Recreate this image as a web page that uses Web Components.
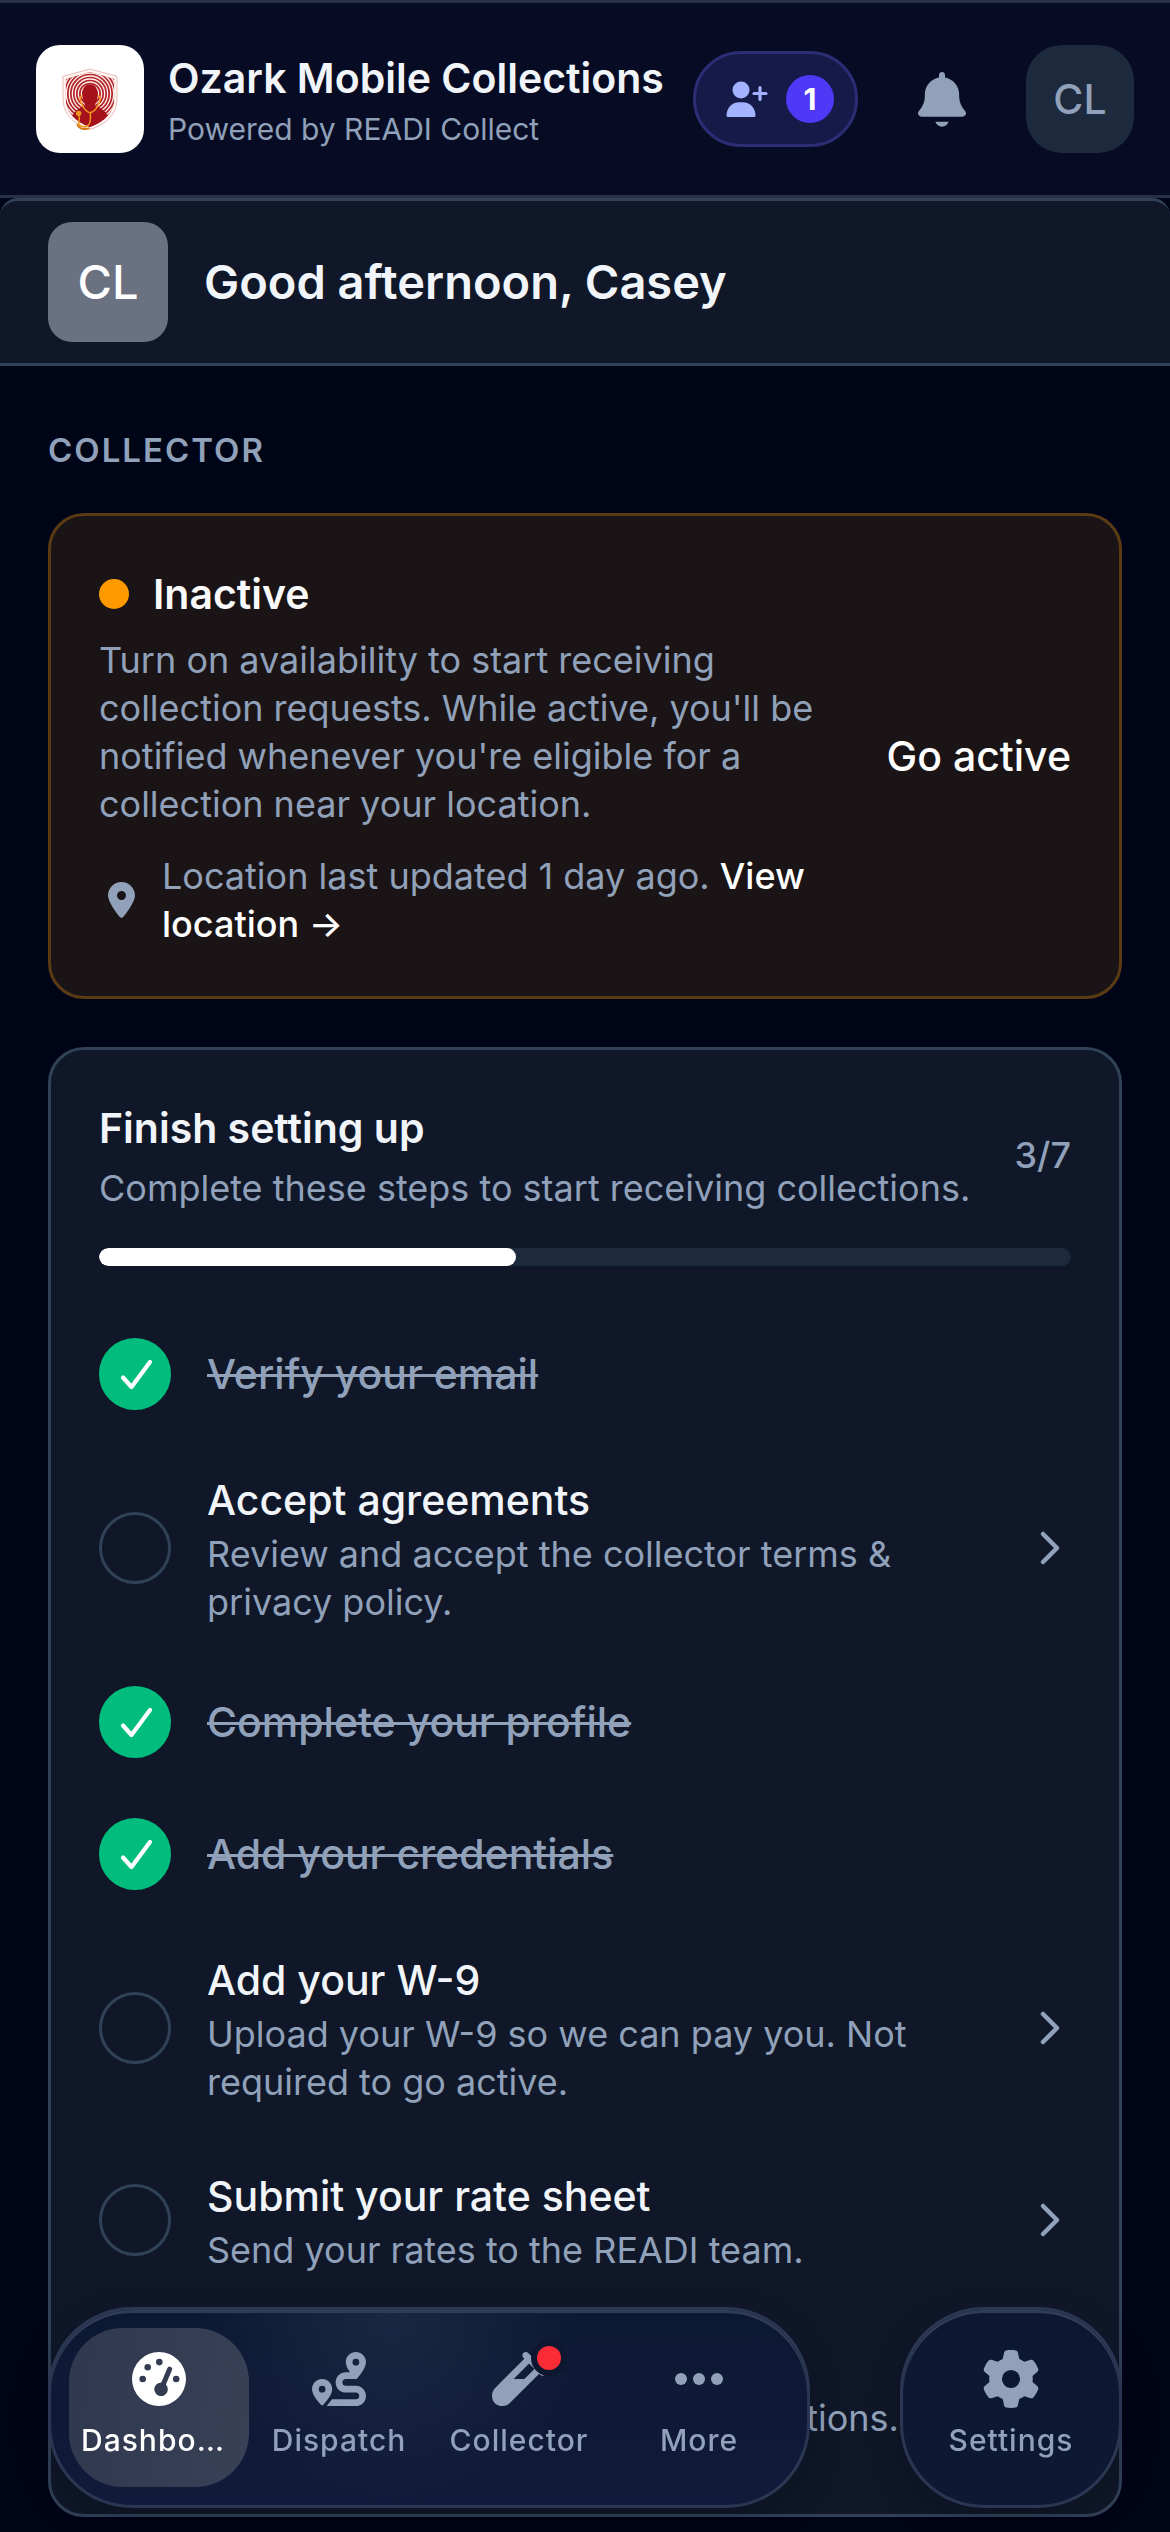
<!DOCTYPE html>
<html lang="en">
<head>
<meta charset="utf-8">
<meta name="viewport" content="width=device-width, initial-scale=1">
<title>Ozark Mobile Collections</title>
<style>
:root {
  --page: #000417;
  --panel: #0f1729;
  --line: #314158;
  --track: #1d293d;
  --muted: #90a1b9;
  --text: #f1f5f9;
  --small: 30px;
  --body: 36px;
  --title: 41px;
  --hero: 47px;
}
* { box-sizing: border-box; }
html { background: var(--page); }
body { margin: 0; min-height: 100vh; background: var(--page); color: var(--text); font-family: Inter, "Noto Sans", sans-serif; font-size: var(--body); line-height: 48px; }
main { display: flex; flex-direction: column; padding: 57px 48px 15px; }
h2 { margin: 0 0 36px; color: var(--muted); font-size: 33px; line-height: 54px; font-weight: 600; letter-spacing: 2px; text-transform: uppercase; }
.cards { display: flex; flex-direction: column; gap: 48px; }
</style>
</head>
<body>
<app-header name="Ozark Mobile Collections" tagline="Powered by READI Collect" requests="1" initials="CL"></app-header>
<greeting-bar initials="CL">Good afternoon, Casey</greeting-bar>
<main>
  <h2>Collector</h2>
  <div class="cards">
    <availability-card>
      <span slot="status">Inactive</span>
      <span slot="text">Turn on availability to start receiving collection requests. While active, you'll be notified whenever you're eligible for a collection near your location.</span>
      <span slot="updated">Location last updated 1 day ago.</span>
      <span slot="link">View location →</span>
      <span slot="action">Go active</span>
    </availability-card>
    <setup-card done="3" total="7">
      <span slot="title">Finish setting up</span>
      <span slot="text">Complete these steps to start receiving collections.</span>
      <setup-step done>Verify your email</setup-step>
      <setup-step note="Review and accept the collector terms &amp; privacy policy.">Accept agreements</setup-step>
      <setup-step done>Complete your profile</setup-step>
      <setup-step done>Add your credentials</setup-step>
      <setup-step note="Upload your W-9 so we can pay you. Not required to go active.">Add your W-9</setup-step>
      <setup-step note="Send your rates to the READI team.">Submit your rate sheet</setup-step>
      <setup-step note="Choose how you learn about collections.">Enable alerts</setup-step>
    </setup-card>
  </div>
</main>
<tab-dock>
  <tab-item icon="gauge" current>Dashboard</tab-item>
  <tab-item icon="route">Dispatch</tab-item>
  <tab-item icon="vial" alert>Collector</tab-item>
  <tab-item icon="dots">More</tab-item>
  <tab-item slot="aside" icon="gear">Settings</tab-item>
</tab-dock>

<script>
const ICONS = {
  bell: ['0 0 448 512', 48, 55, '<path d="M224 0c-15 0-28 12-28 28V51C119 66 64 131 64 208v18.800c0 47-17.300 92.400-48.500 127.600l-7.400 8.300c-8.400 9.400-10.400 22.900-5.300 34.400S19.400 416 32 416H416c12.600 0 24-7.400 29.200-18.900s3.100-25-5.300-34.400l-7.400-8.300C401.300 319.200 384 273.900 384 226.800V208c0-77-55-142-132-157V28c0-16-13-28-28-28z"/><path d="M162 464h124c-9 28-33 46-62 46s-53-18-62-46z"/>'],
  userPlus: ['0 0 42 36', 42, 36, '<circle cx="15" cy="9" r="8.500"/><path d="M.5 34.500C.5 27 6 21.300 13 21.300h4c7 0 12.500 5.700 12.500 13.200 0 .8-.7 1.500-1.500 1.500H2C1.200 36 .5 35.300.5 34.500z"/><path d="M34 6.500v12M28 12.500h12" stroke="currentColor" stroke-width="3.200" stroke-linecap="round"/>'],
  pin: ['0 0 384 512', 27, 36, '<path d="M215.700 499.200C267 435 384 279.400 384 192C384 86 298 0 192 0S0 86 0 192c0 87.400 117 243 168.300 307.200c12.300 15.300 35.100 15.300 47.400 0zM192 128a64 64 0 1 1 0 128 64 64 0 1 1 0-128z"/>'],
  check: ['0 0 36 36', 36, 36, '<path d="M4.500 20.500l8.500 9.500L31.500 5" transform="translate(1.500 1)" fill="none" stroke="currentColor" stroke-width="4.200" stroke-linecap="round" stroke-linejoin="round"/>'],
  chevron: ['0 0 36 36', 42, 36, '<path d="M11 4l14 14-14 14" fill="none" stroke="currentColor" stroke-width="4.500" stroke-linecap="round" stroke-linejoin="round"/>'],
  gauge: ['0 0 54 54', 54, 54, '<path fill-rule="evenodd" d="M27 0a27 27 0 1 1 0 54a27 27 0 1 1 0-54zM10.700 23.700a3.300 3.300 0 1 0 0 6.600a3.300 3.300 0 1 0 0-6.600zM15.700 11.900a3.300 3.300 0 1 0 0 6.600a3.300 3.300 0 1 0 0-6.600zM27.300 6.800a3.300 3.300 0 1 0 0 6.600a3.300 3.300 0 1 0 0-6.600zM44.200 23.700a3.300 3.300 0 1 0 0 6.600a3.300 3.300 0 1 0 0-6.600zM38.700 14.900a2.500 2.500 0 0 0-3.300 1.200L29.300 30.400a6.800 6.800 0 1 0 4.600 2l6-14.200a2.500 2.500 0 0 0-1.200-3.300z"/>'],
  route: ['0 0 512 512', 54, 54, '<path d="M512 96c0 50.200-59.100 125.100-84.600 155c-3.800 4.400-9.400 6.100-14.500 5L320 256c-17.700 0-32 14.300-32 32s14.300 32 32 32l96 0c53 0 96 43 96 96s-43 96-96 96l-276.400 0c8.700-9.900 19.300-22.600 30-36.800c6.300-8.400 12.800-17.600 19-27.200L416 448c17.700 0 32-14.300 32-32s-14.300-32-32-32l-96 0c-53 0-96-43-96-96s43-96 96-96l39.800 0c-21-31.500-39.800-67.700-39.800-96c0-53 43-96 96-96s96 43 96 96zM117.100 489.100c-3.800 4.300-7.200 8.100-10.100 11.300l-1.800 2-.2-.2c-6 4.600-14.600 4-20-1.800C59.800 473 0 402.500 0 352c0-53 43-96 96-96s96 43 96 96c0 30-21.100 67-43.500 97.900c-10.700 14.700-21.700 28-30.800 38.500l-.6 .7zM128 352a32 32 0 1 0 -64 0 32 32 0 1 0 64 0zM416 128a32 32 0 1 0 0-64 32 32 0 1 0 0 64z"/>'],
  vial: ['0 0 512 512', 54, 54, '<path d="M342.600 9.400c-12.500-12.500-32.800-12.500-45.300 0s-12.500 32.800 0 45.300l9.400 9.400L28.100 342.600C10.100 360.600 0 385 0 410.500V416c0 53 43 96 96 96h5.500c25.500 0 49.900-10.100 67.900-28.100L448 205.300l9.400 9.400c12.500 12.500 32.800 12.500 45.300 0s12.500-32.800 0-45.300l-32-32-96-96-32-32zM205.300 256L352 109.300 402.700 160l-96 96H205.300z"/>'],
  dots: ['0 0 54 54', 54, 54, '<circle cx="9" cy="27" r="6"/><circle cx="27" cy="27" r="6"/><circle cx="45" cy="27" r="6"/>'],
  gear: ['0 0 512 512', 58, 58, '<path d="M495.900 166.600c3.200 8.700 .5 18.400-6.400 24.600l-43.300 39.400c1.100 8.300 1.700 16.800 1.700 25.400s-.6 17.100-1.700 25.400l43.300 39.400c6.900 6.200 9.600 15.900 6.400 24.600c-4.400 11.900-9.700 23.300-15.800 34.300l-4.700 8.100c-6.600 11-14 21.400-22.100 31.200c-5.900 7.200-15.700 9.600-24.500 6.800l-55.700-17.700c-13.400 10.300-28.200 18.900-44 25.400l-12.500 57.100c-2 9.100-9 16.300-18.200 17.800c-13.800 2.300-28 3.500-42.500 3.500s-28.700-1.200-42.500-3.500c-9.200-1.500-16.200-8.700-18.200-17.800l-12.500-57.100c-15.800-6.500-30.600-15.100-44-25.400L83.100 425.900c-8.800 2.800-18.600 .3-24.500-6.800c-8.100-9.800-15.500-20.200-22.100-31.200l-4.700-8.100c-6.100-11-11.400-22.400-15.800-34.300c-3.200-8.700-.5-18.400 6.400-24.600l43.300-39.400C64.600 273.100 64 264.600 64 256s.6-17.100 1.700-25.400L22.400 191.200c-6.900-6.200-9.600-15.900-6.400-24.600c4.400-11.900 9.700-23.300 15.800-34.300l4.700-8.100c6.600-11 14-21.400 22.100-31.200c5.900-7.200 15.700-9.600 24.500-6.800l55.700 17.700c13.400-10.300 28.200-18.900 44-25.400l12.500-57.100c2-9.100 9-16.300 18.200-17.800C227.300 1.200 241.500 0 256 0s28.700 1.200 42.500 3.500c9.200 1.500 16.200 8.700 18.200 17.800l12.500 57.100c15.800 6.500 30.600 15.100 44 25.400l55.700-17.700c8.800-2.800 18.600-.3 24.500 6.800c8.100 9.800 15.500 20.200 22.100 31.200l4.700 8.100c6.100 11 11.400 22.400 15.800 34.300zM256 336a80 80 0 1 0 0-160 80 80 0 1 0 0 160z"/>']
};
const icon = n => { const [vb, w, h, d] = ICONS[n]; return `<svg viewBox="${vb}" width="${w}" height="${h}" fill="currentColor" aria-hidden="true">${d}</svg>`; };
const BASE = '*{box-sizing:border-box}svg{display:block;flex:none}a{color:inherit;text-decoration:none}button{margin:0;padding:0;border:0;background:none;color:inherit;font:inherit;cursor:pointer}p,h1,h3{margin:0}';

class Part extends HTMLElement {
  connectedCallback() {
    if (this.shadowRoot) return;
    this.attachShadow({ mode: 'open' }).innerHTML = `<style>${BASE}${this.css()}</style>${this.html()}`;
  }
  attr(n) { return (this.getAttribute(n) || '').replace(/&/g, '&amp;'); }
}

class BrandMark extends Part {
  css() { return ':host{display:flex;align-items:center;justify-content:center;flex:none;width:108px;height:108px;border-radius:24px;background:#fff}'; }
  html() {
    const rings = [26, 35, 44, 53, 62, 71, 80].map(r => `<ellipse cx="210" cy="222" rx="${r}" ry="${r}"/>`).join('');
    return `<svg viewBox="126 145 168 186" width="56" height="62" role="img" aria-label="Ozark shield">
      <defs><clipPath id="s"><path d="M210 157L283 178V236C283 276 256 306 210 322C164 306 137 276 137 236V178Z"/></clipPath></defs>
      <path d="M210 148L291 170V237C291 281 262 313 210 329C158 313 129 281 129 237V170Z" fill="#fff6f4" stroke="#dc9a92" stroke-width="2"/>
      <g clip-path="url(#s)"><rect x="126" y="145" width="168" height="186" fill="#b3262a"/>
        <g fill="none" stroke="#fff1ee" stroke-width="3.800">${rings}</g>
        <path d="M150 330C150 285 165 270 192 260H228C255 270 270 285 270 330Z" fill="#a5121c"/>
        <path d="M187 226C187 204 196 194 210 194S233 204 233 226C233 240 228 248 225 254V268H195V254C192 248 187 240 187 226Z" fill="#a5121c"/></g>
      <g fill="none" stroke="#f3981a" stroke-width="4.500" stroke-linecap="round">
        <path d="M186 228C176 232 182 250 187 256C192 270 204 278 211 279C219 277 230 268 234 256C240 248 244 232 235 228"/>
        <path d="M211 279C213 300 211 316 200 320C186 324 176 318 176 306C180 300 178 292 176 284"/>
        <path d="M172 316C180 328 194 330 206 326" stroke="#d77a12" stroke-width="6"/></g>
      <circle cx="176" cy="281" r="8" fill="#f3981a"/></svg>`;
  }
}

class AppHeader extends Part {
  css() { return `:host{display:block}
    header{display:flex;align-items:center;height:198px;padding:0 36px;border-top:3px solid #282f48;border-bottom:3px solid #282f48;background:#070c24}
    .brand{display:flex;align-items:center;gap:24px;flex:1;min-width:0}
    .names{min-width:0;padding-top:6px;white-space:nowrap}
    h1{font-size:var(--title);line-height:54px;font-weight:600}
    p{color:var(--muted);font-size:var(--small);line-height:48px}
    .actions{display:flex;align-items:center;flex:none}
    .requests{display:flex;align-items:center;gap:18px;height:96px;padding:0 21px 0 30px;border:3px solid #2c2d75;border-radius:48px;background:#151a49;color:#a3b3ff}
    .count{display:grid;place-items:center;width:48px;height:48px;border-radius:50%;background:#4f39f6;color:#fff;font-size:var(--small);line-height:36px;font-weight:700}
    .bell{display:grid;place-items:center;width:168px;height:108px;color:var(--muted)}
    .me{display:grid;place-items:center;width:108px;height:108px;border-radius:36px;background:#1d293d;color:var(--muted);font-size:var(--title);font-weight:500}`; }
  html() { return `<header><a class="brand" href="#home"><brand-mark></brand-mark><div class="names"><h1>${this.attr('name')}</h1><p>${this.attr('tagline')}</p></div></a>
    <div class="actions"><button class="requests" aria-label="Requests">${icon('userPlus')}<span class="count">${this.attr('requests')}</span></button>
    <button class="bell" aria-label="Notifications">${icon('bell')}</button><button class="me">${this.attr('initials')}</button></div></header>`; }
}

class GreetingBar extends Part {
  css() { return `:host{display:flex;align-items:center;gap:36px;padding:21px 48px;border-top:3px solid var(--line);border-bottom:3px solid var(--line);border-radius:18px 18px 0 0;background:var(--panel)}
    .avatar{display:grid;place-items:center;flex:none;width:120px;height:120px;border-radius:24px;background:#6a7282;color:#fff;font-size:var(--hero);font-weight:500}
    h1{font-size:var(--hero);line-height:60px;font-weight:600}`; }
  html() { return `<div class="avatar">${this.attr('initials')}</div><h1><slot></slot></h1>`; }
}

class AvailabilityCard extends Part {
  css() { return `:host{display:flex;align-items:center;justify-content:space-between;gap:48px;padding:48px;border:3px solid #5a3b14;border-radius:36px;background:#1b1416}
    .info{flex:1;min-width:0}
    .status{display:flex;align-items:center;gap:24px;font-size:var(--title);line-height:60px;font-weight:600;color:#fafafa}
    .dot{width:30px;height:30px;border-radius:50%;background:#fe9a00}
    .text{margin-top:12px;color:var(--muted)}
    .where{display:flex;align-items:center;gap:18px;margin-top:24px;color:var(--muted)}
    .pin{display:flex;justify-content:center;flex:none;width:45px}
    .where a{color:#fff;font-weight:500}
    button{flex:none;color:#fff;font-size:var(--title);line-height:60px;font-weight:500}`; }
  html() { return `<div class="info"><h3 class="status"><span class="dot"></span><slot name="status"></slot></h3><p class="text"><slot name="text"></slot></p>
    <div class="where"><span class="pin">${icon('pin')}</span><p><slot name="updated"></slot> <a href="#location"><slot name="link"></slot></a></p></div></div>
    <button><slot name="action"></slot></button>`; }
}

class SetupCard extends Part {
  css() { return `:host{display:block;padding:48px;border:3px solid var(--line);border-radius:36px;background:var(--panel)}
    .head{display:flex;align-items:center;justify-content:space-between;gap:24px}
    h3{font-size:var(--title);line-height:60px;font-weight:600}
    .text{margin-top:6px;color:var(--muted)}
    .count{color:var(--muted);font-weight:500}
    .bar{height:18px;margin-top:36px;border-radius:9px;background:var(--track);overflow:hidden}
    .fill{height:100%;border-radius:9px;background:#fff}
    .steps{display:flex;flex-direction:column;gap:12px;margin-top:48px}`; }
  html() { const d = +this.attr('done'), t = +this.attr('total');
    return `<div class="head"><div><h3><slot name="title"></slot></h3><p class="text"><slot name="text"></slot></p></div><span class="count">${d}/${t}</span></div>
    <div class="bar" role="progressbar" aria-valuemin="0" aria-valuemax="${t}" aria-valuenow="${d}"><div class="fill" style="width:${d / t * 100}%"></div></div>
    <div class="steps"><slot></slot></div>`; }
}

class SetupStep extends Part {
  css() { return `:host{display:block}
    .row{display:flex;align-items:center;gap:36px;padding:24px 0}
    .mark{display:grid;place-items:center;flex:none;width:72px;height:72px;border:3px solid var(--line);border-radius:50%;color:#fff}
    :host([done]) .mark{border-color:#00bc7d;background:#00bc7d}
    .label{flex:1;min-width:0}
    h3{font-size:var(--title);line-height:60px;font-weight:500}
    :host([done]) h3{color:var(--muted);text-decoration:line-through;text-decoration-thickness:3px}
    p{color:var(--muted)}
    .go{flex:none;color:var(--muted)}`; }
  html() {
    const done = this.hasAttribute('done'), tag = done ? 'div' : 'a href="#step"';
    return `<${tag} class="row"><span class="mark">${done ? icon('check') : ''}</span><div class="label"><h3><slot></slot></h3>${done ? '' : `<p>${this.attr('note')}</p>`}</div>${done ? '' : `<span class="go">${icon('chevron')}</span>`}</${done ? 'div' : 'a'}>`;
  }
}

class TabDock extends Part {
  css() { return `:host{position:fixed;left:48px;right:48px;bottom:24px;display:flex;justify-content:space-between}
    nav{display:flex;padding:18px;border:3px solid #2b3653;border-radius:84px;background-color:#0d1835;background-image:radial-gradient(circle at 45% 0,rgba(44,62,88,.4),transparent 42%),linear-gradient(180deg,#0c1933,#111a3a);box-shadow:inset 0 3px 0 #313c57,0 12px 36px rgba(0,0,0,.2)}
    nav + nav{background-image:linear-gradient(180deg,#0c1833,#0d1932)}`; }
  html() { return '<nav aria-label="Main"><slot></slot></nav><nav aria-label="Account"><slot name="aside"></slot></nav>'; }
}

class TabItem extends Part {
  css() { return `:host{display:block;width:180px}
    a{display:flex;flex-direction:column;align-items:center;gap:12px;height:159px;padding:24px 12px;border-radius:54px;color:var(--muted)}
    :host([current]) a{background:linear-gradient(100deg,#30384f,#394157);color:#fff}
    .icon{position:relative;display:flex;align-items:center;justify-content:center;width:54px;height:54px}
    .dot{position:absolute;top:-6px;right:-15px;width:24px;height:24px;border-radius:50%;background:#fb2c36;box-shadow:0 0 0 6px #0d1730}
    .name{max-width:100%;overflow:hidden;white-space:nowrap;text-overflow:ellipsis;font-size:var(--small);line-height:45px;font-weight:500;letter-spacing:1px}`; }
  html() { return `<a href="#${this.attr('icon')}"${this.hasAttribute('current') ? ' aria-current="page"' : ''}><span class="icon">${icon(this.attr('icon'))}${this.hasAttribute('alert') ? '<span class="dot"></span>' : ''}</span><span class="name"><slot></slot></span></a>`; }
}

customElements.define('brand-mark', BrandMark);
customElements.define('app-header', AppHeader);
customElements.define('greeting-bar', GreetingBar);
customElements.define('availability-card', AvailabilityCard);
customElements.define('setup-card', SetupCard);
customElements.define('setup-step', SetupStep);
customElements.define('tab-dock', TabDock);
customElements.define('tab-item', TabItem);
</script>
</body>
</html>
